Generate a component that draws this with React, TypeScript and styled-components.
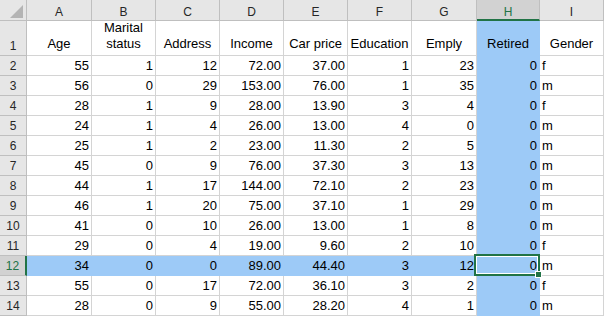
import React from "react";
import styled, { createGlobalStyle, css } from "styled-components";

const GlobalStyle = createGlobalStyle`
  html, body {
    margin: 0;
    padding: 0;
    background: #ffffff;
    overflow: hidden;
  }
  body {
    font-family: "Liberation Sans", Arial, sans-serif;
  }
`;

const GREEN = "#217346";
const BLUE = "#9dcaf7";
const GRID = "#d4d4d4";
const HEAD_BG = "#e6e6e6";
const HEAD_SEL = "#d2d2d2";
const HEAD_LINE = "#bfbfbf";

const Sheet = styled.div`
  display: grid;
  grid-template-columns: 27px 65px 64px 64px 64px 64px 64px 65px 63px 64px;
  grid-template-rows: 21px 35px repeat(13, 20px);
  width: 604px;
  height: 316px;
`;

const Corner = styled.div`
  box-sizing: border-box;
  background: ${HEAD_BG};
  border-right: 1px solid ${HEAD_LINE};
  border-bottom: 1px solid ${HEAD_LINE};
`;

const ColHeader = styled.div<{ $sel?: boolean }>`
  box-sizing: border-box;
  display: flex;
  align-items: flex-end;
  justify-content: center;
  padding-bottom: ${p => (p.$sel ? 0 : 1)}px;
  background: ${p => (p.$sel ? HEAD_SEL : HEAD_BG)};
  border-right: 1px solid ${HEAD_LINE};
  border-bottom: ${p => (p.$sel ? `2px solid ${GREEN}` : `1px solid ${HEAD_LINE}`)};
  color: ${p => (p.$sel ? GREEN : "#262626")};
  font-size: 12px;
  line-height: 14px;
`;

const RowHeader = styled.div<{ $sel?: boolean }>`
  box-sizing: border-box;
  display: flex;
  align-items: flex-end;
  justify-content: center;
  padding-bottom: 2px;
  background: ${p => (p.$sel ? HEAD_SEL : HEAD_BG)};
  border-right: ${p => (p.$sel ? `2px solid ${GREEN}` : `1px solid ${HEAD_LINE}`)};
  border-bottom: 1px solid ${HEAD_LINE};
  color: ${p => (p.$sel ? GREEN : "#262626")};
  font-size: 12px;
  line-height: 14px;
`;

type Align = "left" | "right" | "center";

const Cell = styled.div<{ $align: Align; $sel?: boolean; $wrap?: boolean }>`
  position: relative;
  box-sizing: border-box;
  display: flex;
  align-items: flex-end;
  justify-content: ${p =>
    p.$align === "left" ? "flex-start" : p.$align === "right" ? "flex-end" : "center"};
  text-align: ${p => p.$align};
  padding: 0 2px ${p => (p.$wrap ? 3 : 2)}px;
  font-size: 13px;
  line-height: ${p => (p.$wrap ? 16 : 15)}px;
  color: #000;
  white-space: ${p => (p.$wrap ? "normal" : "nowrap")};
  border-right: 1px solid ${GRID};
  border-bottom: 1px solid ${GRID};
  ${p =>
    p.$sel &&
    css`
      background: ${BLUE};
      border-color: ${BLUE};
    `}
`;

const ActiveBox = styled.span`
  position: absolute;
  top: -2px;
  left: -3px;
  right: -1px;
  bottom: -1px;
  border: 2px solid ${GREEN};
  box-shadow: inset 0 0 0 1px #ffffff;
  pointer-events: none;
  z-index: 1;
`;

const FillHandle = styled.span`
  position: absolute;
  right: -4px;
  bottom: -4px;
  width: 5px;
  height: 5px;
  background: ${GREEN};
  border: 1px solid #ffffff;
  z-index: 2;
`;

const Value = styled.span`
  position: relative;
  z-index: 0;
`;

const columns = ["A", "B", "C", "D", "E", "F", "G", "H", "I"];
const labels = [
  "Age",
  "Marital status",
  "Address",
  "Income",
  "Car price",
  "Education",
  "Emply",
  "Retired",
  "Gender",
];

const rows: string[][] = [
  ["55", "1", "12", "72.00", "37.00", "1", "23", "0", "f"],
  ["56", "0", "29", "153.00", "76.00", "1", "35", "0", "m"],
  ["28", "1", "9", "28.00", "13.90", "3", "4", "0", "f"],
  ["24", "1", "4", "26.00", "13.00", "4", "0", "0", "m"],
  ["25", "1", "2", "23.00", "11.30", "2", "5", "0", "m"],
  ["45", "0", "9", "76.00", "37.30", "3", "13", "0", "m"],
  ["44", "1", "17", "144.00", "72.10", "2", "23", "0", "m"],
  ["46", "1", "20", "75.00", "37.10", "1", "29", "0", "m"],
  ["41", "0", "10", "26.00", "13.00", "1", "8", "0", "m"],
  ["29", "0", "4", "19.00", "9.60", "2", "10", "0", "f"],
  ["34", "0", "0", "89.00", "44.40", "3", "12", "0", "m"],
  ["55", "0", "17", "72.00", "36.10", "3", "2", "0", "f"],
  ["28", "0", "9", "55.00", "28.20", "4", "1", "0", "m"],
];

const SEL_COL = 7;
const SEL_ROW = 12;

export default function App() {
  return (
    <>
      <GlobalStyle />
      <Sheet>
        <Corner>
          <svg width="26" height="20" viewBox="0 0 26 20">
            <polygon points="23,5 23,18 10,18" fill="#b4b4b4" />
          </svg>
        </Corner>
        {columns.map((c, i) => (
          <ColHeader key={c} $sel={i === SEL_COL}>
            {c}
          </ColHeader>
        ))}

        <RowHeader>1</RowHeader>
        {labels.map((l, i) => (
          <Cell key={l} $align="center" $wrap $sel={i === SEL_COL}>
            {l}
          </Cell>
        ))}

        {rows.map((r, ri) => {
          const rowNum = ri + 2;
          const rowSel = rowNum === SEL_ROW;
          return (
            <React.Fragment key={rowNum}>
              <RowHeader $sel={rowSel}>{rowNum}</RowHeader>
              {r.map((v, ci) => {
                const active = rowSel && ci === SEL_COL;
                const sel = ci === SEL_COL || (rowSel && ci < SEL_COL);
                return (
                  <Cell key={ci} $align={ci === 8 ? "left" : "right"} $sel={sel}>
                    {active && (
                      <ActiveBox>
                        <FillHandle />
                      </ActiveBox>
                    )}
                    <Value>{v}</Value>
                  </Cell>
                );
              })}
            </React.Fragment>
          );
        })}
      </Sheet>
    </>
  );
}
